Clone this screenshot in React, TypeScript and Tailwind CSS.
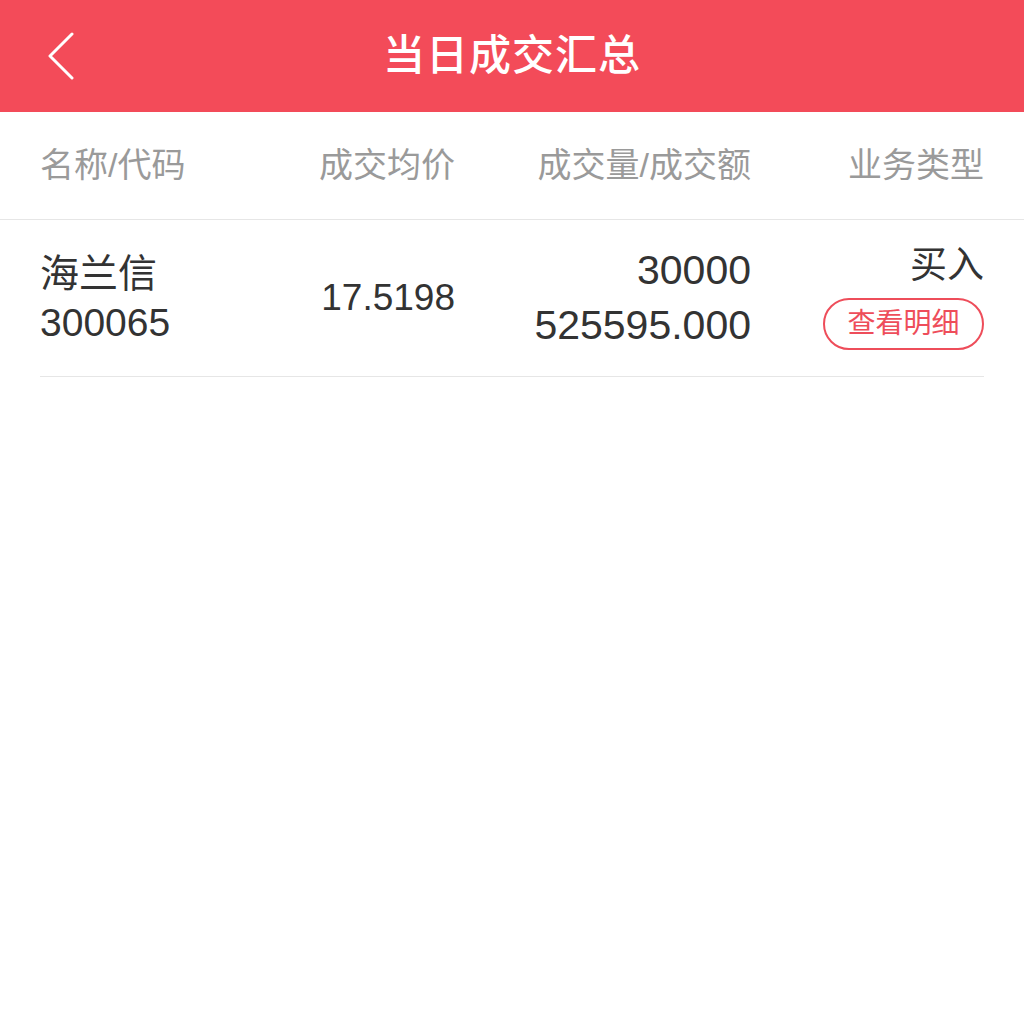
const font = { fontFamily: '"Liberation Sans", "Noto Sans CJK SC", sans-serif' }

export default function App() {
  return (
    <div className="w-[1024px] min-h-[1011px] bg-white" style={font}>
      <div className="h-[112px] bg-[#f34b59] flex items-center">
        <div className="w-[120px] pl-[46px] flex items-center">
          <svg width="30" height="48" viewBox="0 0 30 48" fill="none">
            <path d="M26 2 L4 24 L26 46" stroke="white" strokeWidth="3" strokeLinecap="round" strokeLinejoin="round" />
          </svg>
        </div>
        <h1 className="flex-1 text-center text-white text-[42px] font-medium leading-none tracking-[1px]">当日成交汇总</h1>
        <div className="w-[120px]" />
      </div>

      <div className="h-[108px] flex items-center px-10 text-[34px] text-[#9a9a9a] border-b border-[#e6e6e6]">
        <div className="w-[200px]">名称/代码</div>
        <div className="w-[215px] text-right">成交均价</div>
        <div className="w-[296px] text-right">成交量/成交额</div>
        <div className="flex-1 text-right">业务类型</div>
      </div>

      <div className="mx-10 h-[157px] flex items-center text-[#333] border-b border-[#e6e6e6]">
        <div className="w-[200px] flex flex-col text-[39px] leading-[49px]">
          <span>海兰信</span>
          <span>300065</span>
        </div>
        <div className="w-[215px] text-right text-[37px]">17.5198</div>
        <div className="w-[296px] flex flex-col items-end text-[41px] leading-[55px]">
          <span>30000</span>
          <span>525595.000</span>
        </div>
        <div className="flex-1 flex flex-col items-end">
          <span className="text-[37px] leading-[40px]">买入</span>
          <button className="mt-3 h-[52px] w-[161px] rounded-full border-2 border-[#ee4d5a] text-[#ee4d5a] text-[28px] leading-none">
            查看明细
          </button>
        </div>
      </div>
    </div>
  )
}
